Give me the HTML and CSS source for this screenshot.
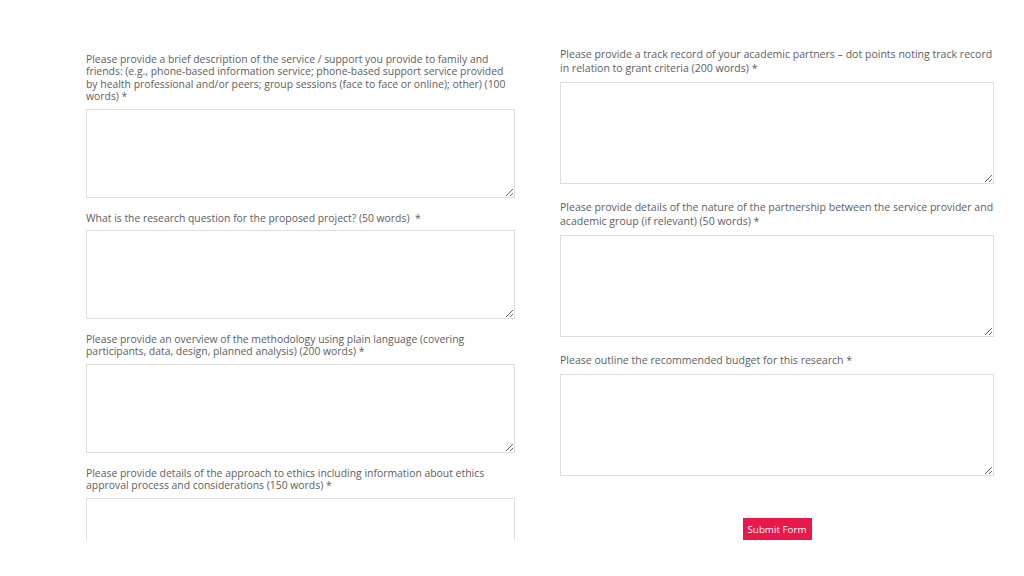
FILE: index.html
```html
<!DOCTYPE html>
<html lang="en">
<head>
    <meta charset="UTF-8">
    <meta name="viewport" content="width=device-width, initial-scale=1.0">
    <title>Grant Application</title>
    <link rel="stylesheet" href="styles.css">
</head>
<body>

<form class="page" action="#" method="post">
    <div class="col col-left">
        <div class="field">
            <label for="q-service">Please provide a brief description of the service / support you provide to family and friends: (e.g., phone-based information service; phone-based support service provided by health professional and/or peers; group sessions (face to face or online); other) (100 words) *</label>
            <textarea id="q-service" name="service"></textarea>
        </div>
        <div class="field">
            <label for="q-question">What is the research question for the proposed project? (50 words)&nbsp; *</label>
            <textarea id="q-question" name="question"></textarea>
        </div>
        <div class="field">
            <label for="q-method">Please provide an overview of the methodology using plain language (covering participants, data, design, planned analysis) (200 words) *</label>
            <textarea id="q-method" name="methodology"></textarea>
        </div>
        <div class="field">
            <label for="q-ethics">Please provide details of the approach to ethics including information about ethics approval process and considerations (150 words) *</label>
            <textarea id="q-ethics" name="ethics"></textarea>
        </div>
    </div>

    <div class="col col-right">
        <div class="field">
            <label for="q-track">Please provide a track record of your academic partners – dot points noting track record in relation to grant criteria (200 words) *</label>
            <textarea id="q-track" name="track_record"></textarea>
        </div>
        <div class="field">
            <label for="q-partner">Please provide details of the nature of the partnership between the service provider and academic group (if relevant) (50 words) *</label>
            <textarea id="q-partner" name="partnership"></textarea>
        </div>
        <div class="field">
            <label for="q-budget">Please outline the recommended budget for this research *</label>
            <textarea id="q-budget" name="budget"></textarea>
        </div>
        <div class="actions">
            <button type="submit">Submit Form</button>
        </div>
    </div>
</form>

</body>
</html>
```

FILE: styles.css
```css
body {
    margin: 0;
    background: #fff;
    font-family: "Open Sans", "Noto Sans", sans-serif;
    color: #606060;
}
.page {
    display: flex;
    gap: 45px;
    height: 540px;
    overflow: hidden;
    padding-left: 86px;
    padding-right: 30px;
}
.col-left {
    width: 429px;
    padding-top: 53px;
    font-size: 10.4px;
    line-height: 12.4px;
}
.col-right {
    width: 434px;
    padding-top: 47px;
    font-size: 10.55px;
    line-height: 14px;
}
.field label {
    display: block;
    margin-bottom: 6px;
}
.col-left .field {
    margin-bottom: 14px;
}
.col-right .field {
    margin-bottom: 16px;
}
.col-right .field label {
    margin-bottom: 7px;
}
textarea {
    display: block;
    box-sizing: border-box;
    width: 100%;
    height: 89px;
    margin: 0;
    border: 1px solid #dedede;
    background: #fff;
    font-family: inherit;
}
.col-right textarea {
    height: 102px;
}
.actions {
    text-align: center;
    padding-top: 26px;
}
.actions button {
    width: 69px;
    height: 22px;
    padding: 0;
    border: 0;
    background: #e9194b;
    color: #fff;
    font-family: inherit;
    font-size: 9.8px;
}
```
